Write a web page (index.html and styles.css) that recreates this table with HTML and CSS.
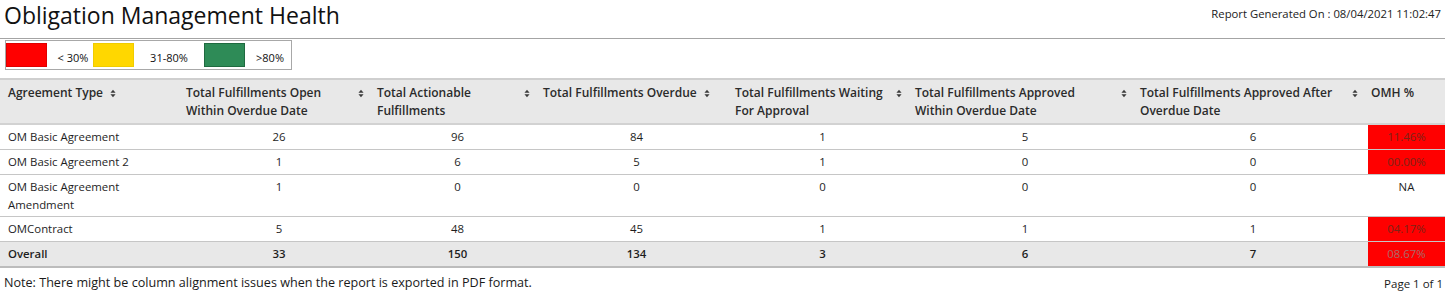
FILE: index.html
```html
<!DOCTYPE html>
<html lang="en">
<head>
<meta charset="utf-8">
<title>Obligation Management Health</title>
<link rel="stylesheet" href="styles.css">
</head>
<body>
<header class="top">
  <h1 class="title">Obligation Management Health</h1>
  <div class="generated">Report Generated On : 08/04/2021 11:02:47</div>
</header>
<div class="legend-row">
  <div class="legend">
    <span class="swatch red"></span><span class="lbl l1">&lt; 30%</span>
    <span class="swatch yellow"></span><span class="lbl l2">31-80%</span>
    <span class="swatch green"></span><span class="lbl l3">&gt;80%</span>
  </div>
</div>
<table class="report">
  <colgroup>
    <col class="c1"><col class="c2"><col class="c3"><col class="c4"><col class="c5"><col class="c6"><col class="c7"><col class="c8">
  </colgroup>
  <thead>
    <tr>
      <th><div class="hd"><span>Agreement Type</span><svg class="sort" viewBox="0 0 7 10"><polygon points="3.5,0.5 6.5,4 0.5,4"/><polygon points="0.5,6 6.5,6 3.5,9.5"/></svg></div></th>
      <th><div class="hd"><span>Total Fulfillments Open Within Overdue Date</span><svg class="sort" viewBox="0 0 7 10"><polygon points="3.5,0.5 6.5,4 0.5,4"/><polygon points="0.5,6 6.5,6 3.5,9.5"/></svg></div></th>
      <th><div class="hd"><span>Total Actionable Fulfillments</span><svg class="sort" viewBox="0 0 7 10"><polygon points="3.5,0.5 6.5,4 0.5,4"/><polygon points="0.5,6 6.5,6 3.5,9.5"/></svg></div></th>
      <th><div class="hd"><span>Total Fulfillments Overdue</span><svg class="sort" viewBox="0 0 7 10"><polygon points="3.5,0.5 6.5,4 0.5,4"/><polygon points="0.5,6 6.5,6 3.5,9.5"/></svg></div></th>
      <th><div class="hd"><span>Total Fulfillments Waiting For Approval</span><svg class="sort" viewBox="0 0 7 10"><polygon points="3.5,0.5 6.5,4 0.5,4"/><polygon points="0.5,6 6.5,6 3.5,9.5"/></svg></div></th>
      <th><div class="hd"><span>Total Fulfillments Approved Within Overdue Date</span><svg class="sort" viewBox="0 0 7 10"><polygon points="3.5,0.5 6.5,4 0.5,4"/><polygon points="0.5,6 6.5,6 3.5,9.5"/></svg></div></th>
      <th><div class="hd"><span>Total Fulfillments Approved After Overdue Date</span><svg class="sort" viewBox="0 0 7 10"><polygon points="3.5,0.5 6.5,4 0.5,4"/><polygon points="0.5,6 6.5,6 3.5,9.5"/></svg></div></th>
      <th><div class="hd"><span>OMH %</span></div></th>
    </tr>
  </thead>
  <tbody>
    <tr>
      <td class="name">OM Basic Agreement</td><td>26</td><td>96</td><td>84</td><td>1</td><td>5</td><td>6</td><td class="omh"><div class="pct bad">11.46%</div></td>
    </tr>
    <tr>
      <td class="name">OM Basic Agreement 2</td><td>1</td><td>6</td><td>5</td><td>1</td><td>0</td><td>0</td><td class="omh"><div class="pct bad">00.00%</div></td>
    </tr>
    <tr class="tall">
      <td class="name">OM Basic Agreement Amendment</td><td>1</td><td>0</td><td>0</td><td>0</td><td>0</td><td>0</td><td class="omh"><div class="pct na">NA</div></td>
    </tr>
    <tr>
      <td class="name">OMContract</td><td>5</td><td>48</td><td>45</td><td>1</td><td>1</td><td>1</td><td class="omh"><div class="pct bad">04.17%</div></td>
    </tr>
    <tr class="overall">
      <td class="name">Overall</td><td>33</td><td>150</td><td>134</td><td>3</td><td>6</td><td>7</td><td class="omh"><div class="pct bad">08.67%</div></td>
    </tr>
  </tbody>
</table>
<footer class="foot">
  <div class="note">Note: There might be column alignment issues when the report is exported in PDF format.</div>
  <div class="page">Page 1 of 1</div>
</footer>
</body>
</html>
```
FILE: styles.css
```css
html, body {
  margin: 0;
  padding: 0;
  background: #ffffff;
}
body {
  font-family: "Open Sans", "Noto Sans", sans-serif;
  font-size: 11.4px;
  color: #1e1e1e;
  width: 1445px;
}
.top {
  display: flex;
  justify-content: space-between;
  align-items: flex-start;
  height: 38px;
  border-bottom: 1px solid #a4a4a4;
}
.title {
  margin: 0;
  padding: 0 0 0 4px;
  font-size: 23px;
  font-weight: 400;
  line-height: 31px;
  color: #111;
}
.generated {
  padding: 6px 4px 0 0;
  font-size: 11.3px;
  line-height: 16px;
  color: #222;
}
.legend-row {
  height: 39px;
  padding: 1px 0 0 5px;
  box-sizing: border-box;
}
.legend {
  display: inline-flex;
  align-items: center;
  border: 1px solid #a8a8a8;
  padding: 1px 0 1px 0;
  height: 26px;
}
.swatch {
  display: block;
  width: 41px;
  height: 24px;
  box-sizing: border-box;
}
.swatch.red { background: #ff0000; border: 1px solid #e00000; }
.swatch.yellow { background: #ffd700; border: 1px solid #f0cc00; }
.swatch.green { background: #2e8b57; border: 1px solid #1f6a40; }
.lbl {
  display: block;
  text-align: center;
  padding-top: 5px;
  font-size: 11px;
  color: #111;
}
.l1 { width: 46px; padding-left: 6px; box-sizing: border-box; }
.l2 { width: 70px; }
.l3 { width: 46px; padding-left: 4px; box-sizing: border-box; }
.report {
  width: 1445px;
  border-collapse: collapse;
  table-layout: fixed;
  border-top: 2px solid #cfcfcf;
  border-bottom: 2px solid #bcbcbc;
}
col.c1 { width: 181px; }
col.c2 { width: 191px; }
col.c3 { width: 166px; }
col.c4 { width: 192px; }
col.c5 { width: 180px; }
col.c6 { width: 225px; }
col.c7 { width: 231px; }
col.c8 { width: 79px; }
thead th {
  background: #e8e8e8;
  text-align: left;
  vertical-align: top;
  font-weight: 600;
  font-size: 12px;
  line-height: 18px;
  color: #2b2b2b;
  padding: 4px 0 3px 5px;
  border-bottom: 2px solid #d2d2d2;
  height: 36px;
  box-sizing: content-box;
}
thead th:first-child { padding-left: 8px; }
.hd {
  display: flex;
  align-items: flex-start;
  gap: 7px;
  padding-right: 8px;
}
.sort {
  flex: none;
  width: 6px;
  height: 9px;
  margin-top: 5px;
  fill: #3a3a3a;
}
tbody td {
  text-align: center;
  vertical-align: top;
  padding: 3px 0 3px 5px;
  line-height: 18px;
  height: 18px;
  color: #1e1e1e;
  border-bottom: 1px solid #c6c6c6;
}
tbody td.name {
  text-align: left;
  padding-left: 8px;
  padding-right: 20px;
}
tr.tall td { padding-bottom: 2px; }
tbody td.omh {
  padding: 0 0 0 2px;
  height: 24px;
}
.pct {
  height: 24px;
  line-height: 24px;
  text-align: center;
}
.pct.bad {
  background: #ff0000;
  color: #7a2418;
}
.pct.na {
  color: #1e1e1e;
}
tr.overall td {
  background: #e8e8e8;
  font-weight: 600;
  border-bottom: none;
}
tr.overall td.omh { background: #e8e8e8; }
tr.overall .pct.bad { color: #a86a6a; font-weight: 400; }
.foot {
  display: flex;
  justify-content: space-between;
  align-items: flex-start;
  padding: 6px 2px 0 4px;
  line-height: 18px;
  color: #1a1a1a;
}
.note { font-size: 12.6px; }
.page {
  font-size: 11.5px;
  padding-top: 1px;
}
```
